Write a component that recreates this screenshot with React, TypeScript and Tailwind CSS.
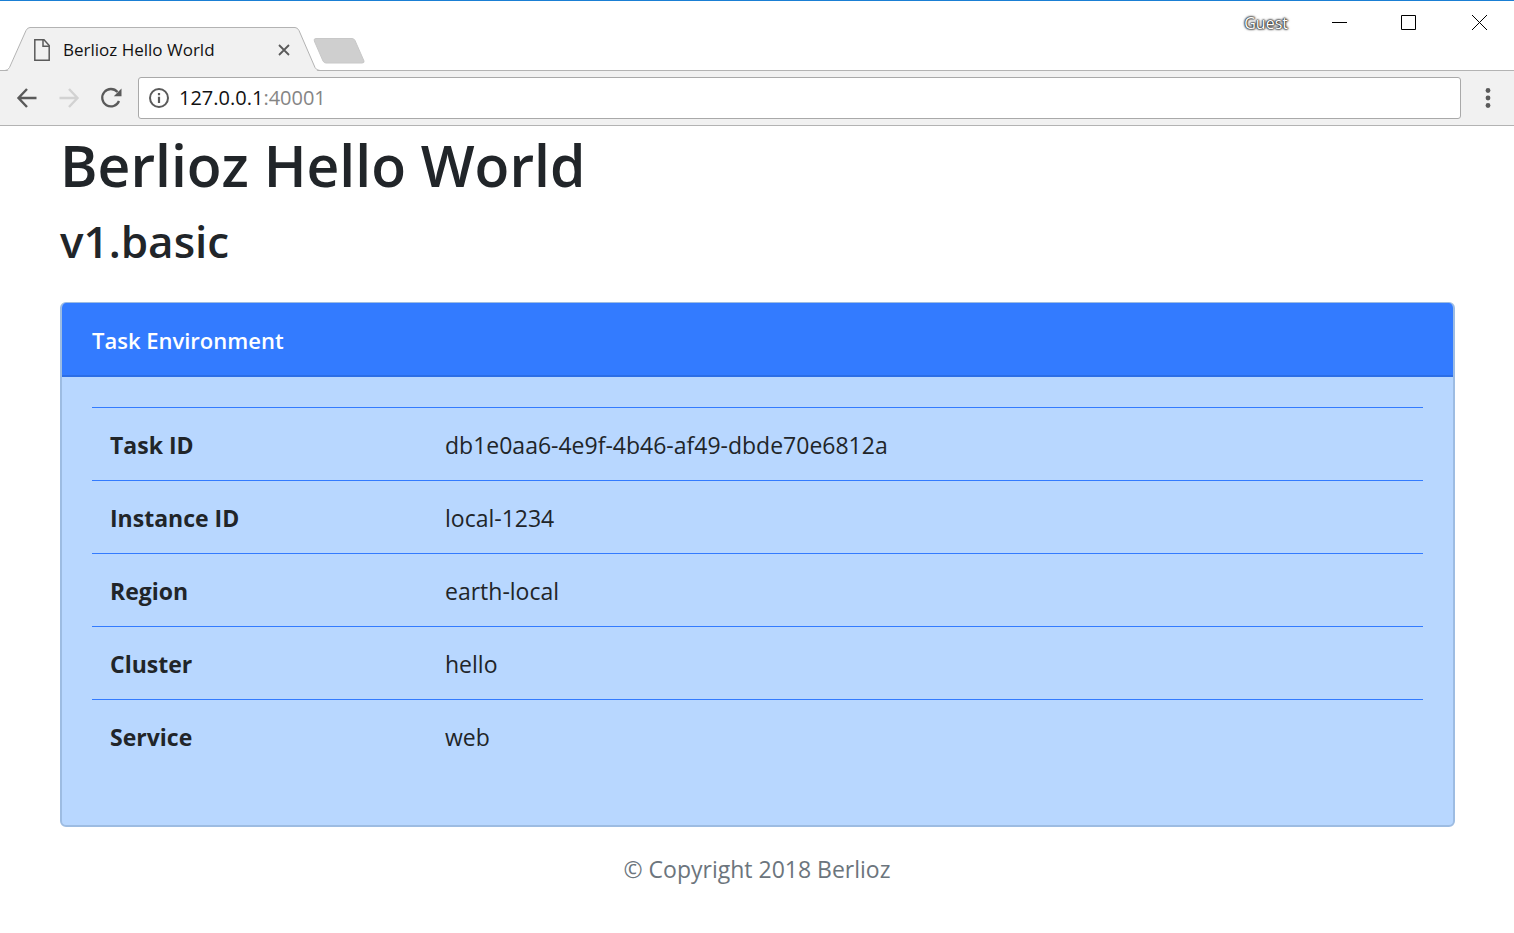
import React from "react";

const rows: [string, string][] = [
  ["Task ID", "db1e0aa6-4e9f-4b46-af49-dbde70e6812a"],
  ["Instance ID", "local-1234"],
  ["Region", "earth-local"],
  ["Cluster", "hello"],
  ["Service", "web"],
];

function TabStrip() {
  return (
    <div className="flex h-[71px] items-end justify-between border-t border-t-[#1a7fd4] bg-white bg-[linear-gradient(#b3b3b3,#b3b3b3)] bg-[length:100%_1px] bg-bottom bg-no-repeat">
      <div className="flex items-end">
        <div className="relative h-[44px] w-[320px]">
          <svg className="absolute inset-0" width="320" height="44" viewBox="0 0 320 44" aria-hidden="true">
            <path d="M7 44 Q9 43 10 40.500 L26 3.500 Q27.500 .5 30 .5 H295 Q297.500 .5 299 3.500 L315 40.500 Q316 43 318 44 Z" fill="#f1f1f1" />
            <path d="M5 43.500 Q8 43.500 9.500 40.500 L26 3.500 Q27.500 .5 30 .5 H295 Q297.500 .5 299 3.500 L315 40.500 Q316.500 43.500 320 43.500" fill="none" stroke="#b3b3b3" />
          </svg>
          <div className="relative flex h-full items-center pt-px pr-7 pl-[34px]">
            <svg width="16" height="22" viewBox="0 0 16 22" fill="none" stroke="#5a5a5a" strokeWidth="1.500" aria-hidden="true">
              <path d="M.8 .8 H10 L15.200 6.500 V21.200 H.8 Z" />
              <path d="M9 .8 V7.300 H15.200" />
            </svg>
            <span className="ml-[13px] grow text-[17px] leading-6 text-[#111]">Berlioz Hello World</span>
            <button type="button" aria-label="Close tab" className="flex size-4 items-center justify-center">
              <svg width="12" height="12" viewBox="0 0 12 12" stroke="#5a5a5a" strokeWidth="1.800" aria-hidden="true">
                <path d="M1 1 L11 11 M11 1 L1 11" />
              </svg>
            </button>
          </div>
        </div>
        <button type="button" aria-label="New tab" className="mb-[6px] -ml-2">
          <svg width="54" height="28" viewBox="0 0 54 28" aria-hidden="true">
            <path d="M4 1.500 H40 Q42 1.500 43 3.500 L52 24 Q52.500 26 50 26 H14 Q12 26 11 24 L2.300 4 Q1.500 1.500 4 1.500Z" fill="#cfcfcf" stroke="#c8c8c8" />
          </svg>
        </button>
      </div>
      <div className="flex items-center self-start pt-[11px]">
        <span className="mr-[44px] text-[16px] leading-[22px] text-white [text-shadow:0_0_1px_#222,0_0_2px_#222,0_0_2px_#222,0_0_3px_#444]">Guest</span>
        <button type="button" aria-label="Minimize" className="mr-[53px]">
          <svg width="16" height="16" viewBox="0 0 16 16" stroke="#000" aria-hidden="true" shapeRendering="crispEdges">
            <path d="M0 7.500 H15" />
          </svg>
        </button>
        <button type="button" aria-label="Maximize" className="mr-[55px]">
          <svg width="16" height="16" viewBox="0 0 16 16" fill="none" stroke="#000" aria-hidden="true">
            <path d="M.5 .5 H14.500 V14.500 H.5Z" />
          </svg>
        </button>
        <button type="button" aria-label="Close window" className="mr-[26px]">
          <svg width="16" height="16" viewBox="0 0 16 16" stroke="#000" aria-hidden="true">
            <path d="M0 0 L15 15 M15 0 L0 15" />
          </svg>
        </button>
      </div>
    </div>
  );
}

function Toolbar() {
  return (
    <div className="flex h-[55px] items-center border-b border-[#b3b3b3] bg-[#f1f1f1] pl-4">
      <button type="button" aria-label="Back">
        <svg width="22" height="22" viewBox="0 0 22 22" fill="none" stroke="#5a5a5a" strokeWidth="2.400" aria-hidden="true">
          <path d="M20.500 11 H3 M11 2 L2.500 11 L11 20" />
        </svg>
      </button>
      <button type="button" aria-label="Forward" disabled className="ml-5">
        <svg width="22" height="22" viewBox="0 0 22 22" fill="none" stroke="#d2d2d2" strokeWidth="2.400" aria-hidden="true">
          <path d="M1.500 11 H19 M11 2 L19.500 11 L11 20" />
        </svg>
      </button>
      <button type="button" aria-label="Reload" className="ml-5">
        <svg width="22" height="22" viewBox="0 0 22 22" aria-hidden="true">
          <path d="M17.500 5 A8.700 8.700 0 1 0 19 14" fill="none" stroke="#5a5a5a" strokeWidth="2.300" />
          <path d="M21.500 1.500 V9.200 H13.800 Z" fill="#5a5a5a" />
        </svg>
      </button>
      <div className="ml-4 flex h-[42px] grow items-center rounded-[3px] border border-[#a9a9a9] bg-white px-[10px]">
        <svg width="20" height="20" viewBox="0 0 20 20" fill="none" stroke="#5a5a5a" aria-hidden="true">
          <circle cx="10" cy="10" r="9" strokeWidth="2" />
          <path d="M10 8.800 V15 M10 5 V7.200" strokeWidth="2.200" />
        </svg>
        <a href="http://127.0.0.1:40001" className="ml-[10px] text-[20px] leading-7 text-[#111]">
          127.0.0.1<span className="text-[#858585]">:40001</span>
        </a>
      </div>
      <button type="button" aria-label="Menu" className="mr-[23px] ml-6">
        <svg width="6" height="20" viewBox="0 0 6 20" fill="#5a5a5a" aria-hidden="true">
          <circle cx="3" cy="2.500" r="2.400" />
          <circle cx="3" cy="10" r="2.400" />
          <circle cx="3" cy="17.500" r="2.400" />
        </svg>
      </button>
    </div>
  );
}

export default function App() {
  return (
    <div className="min-h-screen bg-white font-['Open_Sans','Noto_Sans',sans-serif] text-[#212529]">
      <header>
        <TabStrip />
        <Toolbar />
      </header>
      <main className="pt-[3px] pr-[59px] pl-[60px]">
        <h1 className="text-[57px] leading-[72px] font-semibold">Berlioz Hello World</h1>
        <h2 className="mt-[11px] text-[44px] leading-[58px] font-semibold">v1.basic</h2>
        <section className="mt-8 overflow-hidden rounded-md border-2 border-t border-[#9dbce2] bg-[#b8d7ff]">
          <div className="border-b-2 border-[#2c6ee6] bg-[#337bff] px-[30px] pt-[19px] pb-[17px] text-[22px] leading-9 font-semibold text-white">
            Task Environment
          </div>
          <div className="px-[30px] pt-[30px] pb-[53px]">
            <table className="w-full border-collapse text-left text-[23px] leading-9">
              <tbody>
                {rows.map(([label, value]) => (
                  <tr key={label} className="border-t border-[#337bff]">
                    <th scope="row" className="w-[335px] px-[18px] pt-[19px] pb-[17px] font-bold">{label}</th>
                    <td className="px-[18px] pt-[19px] pb-[17px]">{value}</td>
                  </tr>
                ))}
              </tbody>
            </table>
          </div>
        </section>
      </main>
      <footer className="py-6 text-center text-[23px] leading-9 text-[#6c757d]">© Copyright 2018 Berlioz</footer>
    </div>
  );
}
